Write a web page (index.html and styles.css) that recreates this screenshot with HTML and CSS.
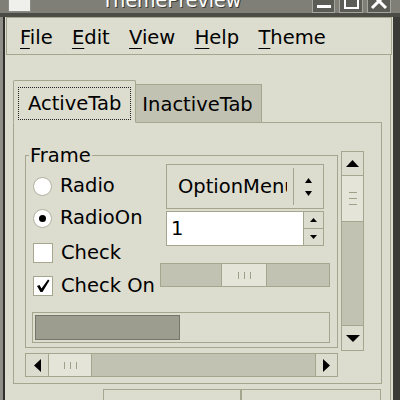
FILE: index.html
```html
<!DOCTYPE html>
<html>
<head>
<meta charset="utf-8">
<link rel="stylesheet" href="styles.css">
</head>
<body>
<div class="win">
  <div class="titlebar">
    <div class="tb-icon"></div>
    <div class="tb-title">ThemePreview</div>
    <div class="tb-btns">
      <div class="tb-btn tb-btn-s"><svg width="22" height="12" viewBox="0 0 22 12"><rect x="4" y="5" width="14" height="3" fill="#fff"/></svg></div>
      <div class="tb-btn"><svg width="22" height="12" viewBox="0 0 22 12"><rect x="5" y="-4" width="13" height="12" fill="none" stroke="#fff" stroke-width="2"/></svg></div>
      <div class="tb-btn"><svg width="22" height="12" viewBox="0 0 22 12"><path d="M4 -6 L18 8 M18 -6 L4 8" stroke="#fff" stroke-width="3" fill="none"/></svg></div>
    </div>
  </div>
  <div class="frame-row">
    <div class="frame-left"></div>
    <div class="client">
      <div class="menubar">
        <span class="mi"><span class="mn">F</span>ile</span>
        <span class="mi"><span class="mn">E</span>dit</span>
        <span class="mi"><span class="mn">V</span>iew</span>
        <span class="mi"><span class="mn">H</span>elp</span>
        <span class="mi"><span class="mn">T</span>heme</span>
      </div>
      <div class="lower">
        <div class="notebook">
          <div class="tabs">
            <div class="tab-active"><span class="focus">ActiveTab</span></div>
            <div class="tab-inactive">InactiveTab</div>
            <div class="tab-fill"></div>
          </div>
          <div class="panel">
            <div class="frame">
              <div class="frame-title">Frame</div>
              <div class="frame-body">
                <div class="left-col">
                  <div class="opt"><span class="radio"></span><span>Radio</span></div>
                  <div class="opt"><span class="radio on"></span><span>RadioOn</span></div>
                  <div class="opt chk first-chk"><span class="check"></span><span>Check</span></div>
                  <div class="opt chk"><span class="check"><svg width="18" height="18" viewBox="0 0 18 18"><path d="M3 9 L5.5 8 L7.5 11.5 L14 2.5 L15.5 3.5 L8.5 15 L6.5 15 Z" fill="#000"/></svg></span><span>Check On</span></div>
                </div>
                <div class="right-col">
                  <div class="optmenu">
                    <div class="om-label">OptionMenu</div>
                    <div class="om-sep"></div>
                    <div class="om-arrows">
                      <svg width="7" height="5" viewBox="0 0 7 5"><polygon points="0,5 3.5,0 7,5" fill="#000"/></svg>
                      <svg width="7" height="5" viewBox="0 0 7 5"><polygon points="0,0 7,0 3.5,5" fill="#000"/></svg>
                    </div>
                  </div>
                  <div class="spin">
                    <div class="spin-entry">1</div>
                    <div class="spin-btns">
                      <div class="spin-up"><svg width="7" height="4" viewBox="0 0 7 4"><polygon points="0,4 3.5,0 7,4" fill="#000"/></svg></div>
                      <div class="spin-down"><svg width="7" height="4" viewBox="0 0 7 4"><polygon points="0,0 7,0 3.5,4" fill="#000"/></svg></div>
                    </div>
                  </div>
                  <div class="hscale">
                    <div class="hs-slider"><span class="vgrip"></span><span class="vgrip"></span><span class="vgrip"></span></div>
                  </div>
                </div>
                <div class="progress"><div class="progress-fill" style="width:49.7%"></div></div>
              </div>
            </div>
            <div class="vscroll">
              <div class="vs-up"><svg width="13" height="7" viewBox="0 0 13 7"><polygon points="0,7 6.5,0 13,7" fill="#000"/></svg></div>
              <div class="vs-thumb"><span class="hgrip"></span><span class="hgrip"></span><span class="hgrip"></span></div>
              <div class="vs-trough"></div>
              <div class="vs-down"><svg width="14" height="7" viewBox="0 0 14 7"><polygon points="0,0 14,0 7,7" fill="#000"/></svg></div>
            </div>
            <div class="hscroll">
              <div class="hs-left"><svg width="7" height="13" viewBox="0 0 7 13"><polygon points="7,0 7,13 0,6.5" fill="#000"/></svg></div>
              <div class="hs-thumb"><span class="vgrip"></span><span class="vgrip"></span><span class="vgrip"></span></div>
              <div class="hs-trough"></div>
              <div class="hs-right"><svg width="7" height="13" viewBox="0 0 7 13"><polygon points="0,0 7,6.5 0,13" fill="#000"/></svg></div>
            </div>
          </div>
        </div>
        <div class="dlg-btns"><div class="dbtn"></div><div class="dbtn dbtn-2"></div></div>
      </div>
    </div>
    <div class="frame-right"></div>
  </div>
</div>
</body>
</html>
```
FILE: styles.css
```css
:root {
  --bg: #dcdccf;
  --line: #a6a68e;
  --trough: #c2c2b2;
  --light: #e4e4d9;
  --grip: #a0a088;
}
* { box-sizing: border-box; }
body {
  margin: 0;
  width: 400px;
  height: 400px;
  overflow: hidden;
  background: #3a3a36;
  font-family: "DejaVu Sans", sans-serif;
  font-size: 19.5px;
  line-height: 22px;
  color: #000;
}
.win { width: 400px; height: 400px; display: flex; flex-direction: column; overflow: hidden; }

/* title bar */
.titlebar {
  flex: none;
  height: 17px;
  border-bottom: 4px solid #4c4c47;
  background: #7f7f77;
  display: flex;
  overflow: hidden;
}
.tb-icon { flex: none; width: 23px; height: 12px; margin-left: 8px; background: #efefec; border: 1px solid #8a8a84; border-top: none; }
.tb-title { flex: 1; text-align: center; color: #fff; margin-top: -11px; white-space: nowrap; text-shadow: 1px 1px 0 #3a3a36; font-size: 19px; }
.tb-btns { flex: none; display: flex; gap: 4px; margin-right: 9px; }
.tb-btn { width: 24px; height: 13px; background: #5c5c56; border: 1px solid #a6a69e; border-top: none; }
.tb-btn-s { width: 23px; }
.tb-btn svg { display: block; }

/* window frame */
.frame-row { flex: 1; display: flex; min-height: 0; }
.frame-left { flex: none; width: 5px; background: linear-gradient(to right, #8e8e86 0 3px, #2f2f2c 3px); }
.frame-right { flex: none; width: 7px; background: #3a3a36; }
.client { flex: 1; min-width: 0; background: var(--bg); display: flex; flex-direction: column; overflow: hidden; }

/* menubar */
.menubar {
  flex: none;
  height: 38px;
  margin: 0 1px;
  border: 1px solid var(--line);
  display: flex;
  gap: 19.3px;
  padding: 9px 0 0 13px;
  white-space: nowrap;
}
.mn { text-decoration: underline; text-underline-offset: 4px; text-decoration-thickness: 1px; }

.lower { flex: 1; min-height: 0; margin-right: 2px; border-right: 1px solid var(--line); }

/* notebook */
.notebook { margin: 25px 0 0 8px; width: 369px; }
.tabs { display: flex; align-items: flex-end; height: 43px; }
.tab-active {
  border: 1px solid var(--line);
  border-bottom-color: var(--bg);
  border-radius: 2px 2px 0 0;
  padding: 6px 4px 2px;
}
.focus { display: block; border: 1px dotted #222; padding: 5px 9px 4px 9px; white-space: nowrap; }
.tab-inactive {
  background: var(--trough);
  border: 1px solid var(--line);
  border-left: none;
  padding: 9px 8px 6px 6px;
  white-space: nowrap;
}
.tab-fill { flex: 1; border-bottom: 1px solid var(--line); }
.panel {
  border: 1px solid var(--line);
  border-top: none;
  padding: 28px 0 6px 11px;
  display: grid;
  grid-template-columns: 313px 23px;
  column-gap: 3px;
  row-gap: 2px;
  align-items: start;
}

/* frame */
.frame { margin-top: 4px; border: 1px solid var(--line); }
.frame-title { width: max-content; margin: -11px 0 -11px 3px; padding: 0 1px; background: var(--bg); }
.frame-body {
  display: grid;
  grid-template-columns: 134px 164px;
  row-gap: 10px;
  padding: 8px 7px 4px 6px;
}
.left-col { margin: 6px 0 0 1px; }
.opt { display: flex; align-items: center; gap: 8px; height: 32px; white-space: nowrap; }
.opt.chk { height: 33px; }
.opt.first-chk { margin-top: 2px; }
.radio {
  flex: none;
  width: 19px; height: 19px;
  border-radius: 50%;
  border: 1px solid #b2b2a2;
  background: #fff;
  display: flex; align-items: center; justify-content: center;
}
.radio.on::after { content: ""; width: 7px; height: 7px; border-radius: 50%; background: #000; }
.check { flex: none; width: 20px; height: 20px; border: 1px solid var(--line); background: #fff; }
.check svg { display: block; }

.optmenu { width: 158px; height: 45px; border: 1px solid var(--line); display: flex; align-items: center; }
.om-label { flex: none; width: 120px; overflow: hidden; white-space: nowrap; padding-left: 11px; }
.om-sep { flex: none; width: 1px; align-self: stretch; margin: 3px 0 3px 6px; background: var(--line); }
.om-arrows { flex: 1; display: flex; flex-direction: column; align-items: center; gap: 8px; }
.om-arrows svg { display: block; }

.spin { margin-top: 2px; width: 158px; height: 35px; border: 1px solid var(--line); display: flex; }
.spin-entry { flex: 1; background: #fff; border-right: 1px solid var(--line); padding-left: 4px; line-height: 33px; }
.spin-btns { flex: none; width: 19px; display: flex; flex-direction: column; }
.spin-up { height: 17px; border-bottom: 1px solid var(--line); display: flex; align-items: center; justify-content: center; }
.spin-down { flex: 1; display: flex; align-items: center; justify-content: center; }
.spin svg { display: block; }

.hscale {
  margin: 17px 0 0 -6px;
  width: 170px; height: 24px;
  border: 1px solid var(--line);
  background: var(--trough);
  padding-left: 60px;
  display: flex;
}
.hs-slider {
  width: 46px;
  background: var(--light);
  border-left: 1px solid var(--line);
  border-right: 1px solid var(--line);
  display: flex; align-items: center; justify-content: center; gap: 5px;
}
.vgrip { width: 1px; height: 7px; background: var(--grip); }
.hgrip { width: 8px; height: 1px; background: var(--grip); }

.progress { grid-column: 1 / -1; height: 31px; border: 1px solid var(--line); padding: 2px; }
.progress-fill { height: 100%; background: #9c9c8f; border: 1px solid #75756a; }

/* scrollbars */
.vscroll {
  width: 23px; height: 200px;
  border: 1px solid var(--line);
  background: var(--trough);
  display: flex; flex-direction: column;
}
.vs-up { flex: none; height: 24px; background: var(--bg); border-bottom: 1px solid var(--line); display: flex; align-items: center; justify-content: center; }
.vs-thumb { flex: none; height: 46px; background: var(--light); border-bottom: 1px solid var(--line); display: flex; flex-direction: column; align-items: center; justify-content: center; gap: 5px; }
.vs-trough { flex: 1; }
.vs-down { flex: none; height: 25px; background: var(--bg); border-top: 1px solid var(--line); display: flex; align-items: center; justify-content: center; }
.vscroll svg, .hscroll svg { display: block; }

.hscroll {
  height: 24px;
  border: 1px solid var(--line);
  background: var(--trough);
  display: flex;
}
.hs-left { flex: none; width: 23px; background: var(--bg); border-right: 1px solid var(--line); display: flex; align-items: center; justify-content: center; }
.hs-thumb { flex: none; width: 43px; background: var(--light); border-right: 1px solid var(--line); display: flex; align-items: center; justify-content: center; gap: 5px; }
.hs-trough { flex: 1; }
.hs-right { flex: none; width: 22px; background: var(--bg); border-left: 1px solid var(--line); display: flex; align-items: center; justify-content: center; }

/* dialog buttons */
.dlg-btns { display: flex; margin-top: 5px; padding-left: 98px; }
.dbtn { flex: none; width: 138px; height: 30px; border: 1px solid var(--line); }
.dbtn-2 { width: 140px; }
```
